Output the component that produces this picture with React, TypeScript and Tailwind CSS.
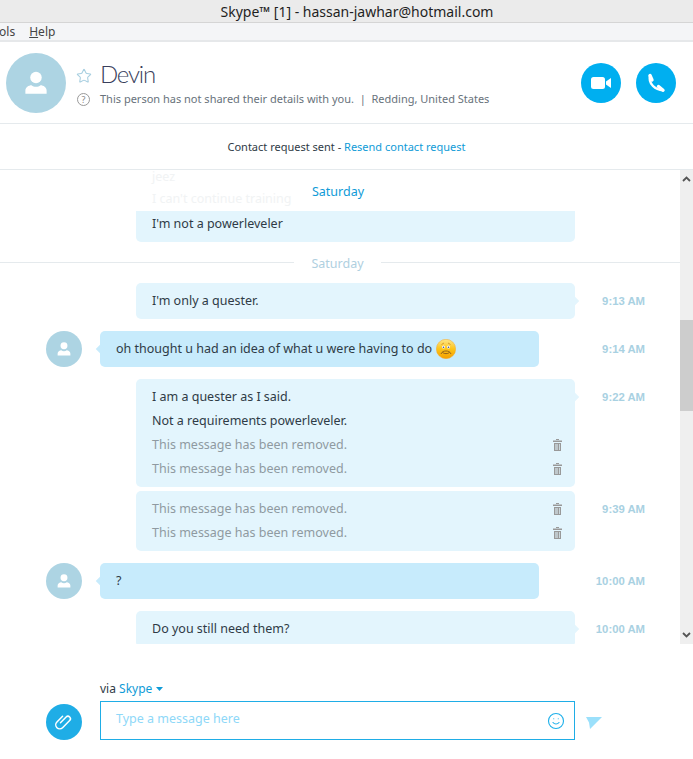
import React from 'react';
import { Smile, Star } from 'lucide-react';

const font = "font-['Noto_Sans','Open_Sans',sans-serif]";

const PersonIcon: React.FC<{ size: number }> = ({ size }) => (
  <svg width={size} height={size} viewBox="0 0 24 24" fill="#fff">
    <circle cx="12" cy="7.6" r="4.6" />
    <path d="M3.5 20.5v-2.4c0-2.6 2.6-4.3 4.9-4.3 1 .8 2.2 1.2 3.6 1.2s2.600-.4 3.600-1.200c2.300 0 4.900 1.700 4.900 4.300v2.400z" />
  </svg>
);

const Avatar: React.FC = () => (
  <div className="w-9 h-9 rounded-full bg-[#add4e3] flex items-center justify-center shrink-0">
    <PersonIcon size={18} />
  </div>
);

const TrashIcon: React.FC = () => (
  <svg width="9" height="12" viewBox="0 0 9 12" fill="#999" className="shrink-0">
    <rect x="3" y="0" width="3" height="1" />
    <rect x="0" y="1.500" width="9" height="1.500" />
    <path d="M1 4h7v8H1zM2.500 5v6h1V5zm2 0h.500v6h-.500zm1.500 0v6h.700V5z" fillRule="evenodd" />
  </svg>
);

const SadEmoji: React.FC = () => (
  <svg width="20" height="20" viewBox="0 0 20 20" className="shrink-0">
    <defs>
      <linearGradient id="face" x1="0" y1="0" x2="0" y2="1">
        <stop offset="0" stopColor="#fde68a" />
        <stop offset="0.5" stopColor="#fcc419" />
        <stop offset="1" stopColor="#f59f00" />
      </linearGradient>
    </defs>
    <circle cx="10" cy="10" r="9.700" fill="url(#face)" stroke="#f4a62a" strokeWidth="0.500" />
    <path d="M5.500 5.500l2.500-1.500M14.500 5.500l-2.500-1.500" stroke="#c98a2b" strokeWidth="0.800" fill="none" />
    <circle cx="7.500" cy="8" r="1.500" fill="#fff" />
    <circle cx="12.500" cy="8" r="1.500" fill="#fff" />
    <circle cx="7.500" cy="8.300" r="0.800" fill="#3b4a9c" />
    <circle cx="12.500" cy="8.300" r="0.800" fill="#3b4a9c" />
    <path d="M5 15c1-2.500 3-3 5-3s4 .500 5 3M6.500 13.500c2 1.500 5 1.500 7 0" stroke="#8a5a1a" strokeWidth="0.900" fill="none" />
  </svg>
);

const Time: React.FC<{ children: React.ReactNode }> = ({ children }) => (
  <div className="ml-auto h-9 flex items-center font-['Liberation_Sans',sans-serif] font-bold text-[11.3px] text-[#a9d1e2]">
    {children}
  </div>
);

const Tail: React.FC<{ side: 'left' | 'right'; color: string }> = ({ side, color }) => (
  <span
    className={`absolute top-[15px] w-[6px] h-[6px] rotate-45 ${color} ${side === 'right' ? '-right-[3px]' : '-left-[3px]'}`}
  />
);

const Removed: React.FC = () => (
  <div className="h-6 flex items-center justify-between text-[#8f9aa1]">
    <span>This message has been removed.</span>
    <TrashIcon />
  </div>
);

const Line: React.FC<{ children: React.ReactNode }> = ({ children }) => (
  <div className="h-6 flex items-center">{children}</div>
);

const OwnRow: React.FC<{ time?: string; mt?: string; tail?: boolean; children: React.ReactNode }> = ({ time, mt, tail, children }) => (
  <div className={`flex items-start pl-[136px] pr-[35px] ${mt ?? 'mt-3'}`}>
    <div className="relative w-[439px] bg-[#e3f5fd] rounded-[5px] pl-4 pr-[13px] py-[6px]">
      {tail && <Tail side="right" color="bg-[#e3f5fd]" />}
      {children}
    </div>
    {time && <Time>{time}</Time>}
  </div>
);

const TheirRow: React.FC<{ time: string; children: React.ReactNode }> = ({ time, children }) => (
  <div className="flex items-start pl-[46px] pr-[35px] mt-3">
    <Avatar />
    <div className="relative ml-[18px] w-[439px] h-9 bg-[#c7ebfc] rounded-[5px] px-4 flex items-center gap-1">
      <Tail side="left" color="bg-[#c7ebfc]" />
      {children}
    </div>
    <Time>{time}</Time>
  </div>
);

const Chat: React.FC = () => (
  <div className="relative flex-1 h-[474px] overflow-hidden text-[12.5px]">
    <div className="absolute top-[13px] left-0 w-[676px] text-center text-[#0f9bd7]">Saturday</div>
    <div className="pl-[152px] h-[41px] text-[#f1f3f4] leading-6 overflow-hidden">
      <div className="h-[17px] leading-[14px]">jeez</div>
      <div>I can't continue training</div>
    </div>
    <div className="ml-[136px] w-[439px] h-[31px] bg-[#e3f5fd] rounded-b-[5px] px-4 flex items-center pb-[5px]">
      I'm not a powerleveler
    </div>
    <div className="flex items-center mt-[13px] h-[15px]">
      <div className="w-[294px] h-px bg-[#e5eaed]" />
      <div className="w-[87px] text-center text-[#b0d0df] pt-[3px]">Saturday</div>
      <div className="flex-1 h-px bg-[#e5eaed]" />
    </div>
    <OwnRow time="9:13 AM" mt="mt-[13px]" tail>
      <Line>I'm only a quester.</Line>
    </OwnRow>
    <TheirRow time="9:14 AM">
      <span>oh thought u had an idea of what u were having to do</span>
      <SadEmoji />
    </TheirRow>
    <OwnRow time="9:22 AM" tail>
      <Line>I am a quester as I said.</Line>
      <Line>Not a requirements powerleveler.</Line>
      <Removed />
      <Removed />
    </OwnRow>
    <OwnRow time="9:39 AM" mt="mt-1">
      <Removed />
      <Removed />
    </OwnRow>
    <TheirRow time="10:00 AM">
      <span>?</span>
    </TheirRow>
    <OwnRow time="10:00 AM" tail>
      <Line>Do you still need them?</Line>
    </OwnRow>
  </div>
);

const Scrollbar: React.FC = () => (
  <div className="w-[13px] h-[474px] bg-[#efefef] flex flex-col items-center justify-between relative">
    <svg width="9" height="6" viewBox="0 0 9 6" className="mt-[6px]" fill="none" stroke="#555" strokeWidth="1.800">
      <path d="M1 5l3.500-3.500L8 5" />
    </svg>
    <div className="absolute top-[150px] left-0 w-full h-[91px] bg-[#cdcdcd]" />
    <svg width="9" height="6" viewBox="0 0 9 6" className="mb-[6px]" fill="none" stroke="#555" strokeWidth="1.800">
      <path d="M1 1l3.500 3.500L8 1" />
    </svg>
  </div>
);

export default function App() {
  return (
    <div className={`${font} w-[693px] h-[759px] bg-white text-[12px] text-[#2f3b46] overflow-hidden`}>
      <div className="h-[23px] bg-[#ebebeb] border-b border-[#d5d5d5] flex items-center justify-center pl-[21px] text-[14px] text-[#1f1f1f]">
        Skype™ [1] - hassan-jawhar@hotmail.com
      </div>
      <div className="h-[19px] bg-[#f4f5f7] border-b-2 border-[#e6e8ea] flex items-center text-[#444] -ml-[14px] gap-[14px]">
        <span>Tools</span>
        <span><span className="underline">H</span>elp</span>
      </div>
      <div className="h-[82px] border-b border-[#e5eaed] flex items-center pl-[6px] pr-[17px]">
        <div className="w-[60px] h-[60px] rounded-full bg-[#add4e3] flex items-center justify-center">
          <PersonIcon size={30} />
        </div>
        <div className="ml-[10px] flex-1 pt-[3px]">
          <div className="flex items-center h-[30px]">
            <Star size={16} strokeWidth={1.600} className="text-[#a8cfe0]" />
            <span className="ml-[8px] mb-[4px] text-[24px] tracking-[-1.2px] font-['Lato',sans-serif] font-light text-[#3a3f5c] leading-none">Devin</span>
          </div>
          <div className="flex items-center">
            <div className="w-[13px] h-[13px] ml-px rounded-full border border-[#999] flex items-center justify-center text-[9px] leading-none text-[#888]">?</div>
            <span className="ml-[10px] text-[11px] text-[#68727b]">This person has not shared their details with you.&nbsp; |&nbsp; Redding, United States</span>
          </div>
        </div>
        <div className="flex gap-[15px]">
          <div className="w-10 h-10 rounded-full bg-[#00aff0] flex items-center justify-center">
            <svg width="20" height="12" viewBox="0 0 20 12" fill="#fff">
              <rect x="0" y="0" width="14" height="12" rx="2.500" />
              <path d="M15 4.500L20 1v10l-5-3.500z" />
            </svg>
          </div>
          <div className="w-10 h-10 rounded-full bg-[#00aff0] flex items-center justify-center">
            <svg width="20" height="20" viewBox="0 0 20 20" fill="none" stroke="#fff" strokeLinecap="round">
              <path d="M4 2.500c-1 4 .500 8 3 10.500s5.500 4 10 4.200" strokeWidth="2.400" />
              <path d="M4 2.500l2 4.500M12.500 13.500l4.500 3.700" strokeWidth="3.400" />
            </svg>
          </div>
        </div>
      </div>
      <div className="h-[46px] border-b border-[#e5eaed] flex items-center justify-center text-[11px] pt-[2px]">
        <span>Contact request sent - <span className="text-[#0f9bd7]">Resend contact request</span></span>
      </div>
      <div className="flex">
        <Chat />
        <Scrollbar />
      </div>
      <div className="mt-[35px] pl-[100px] h-[20px] flex items-center gap-1">
        <span>via <span className="text-[#0f9bd7]">Skype</span></span>
        <svg width="7" height="4" viewBox="0 0 7 4" fill="#0f9bd7"><path d="M0 0h7L3.500 4z" /></svg>
      </div>
      <div className="mt-[2px] pl-[46px] flex items-end">
        <div className="w-9 h-9 rounded-full bg-[#1fade6] flex items-center justify-center">
          <svg width="24" height="24" viewBox="0 0 24 24" fill="none" stroke="#fff" strokeWidth="1.500" strokeLinecap="round">
            <path transform="rotate(45 12 12)" d="M10 15V7a2.500 2.500 0 0 1 5 0v10a4 4 0 0 1-8 0V9" />
          </svg>
        </div>
        <div className="ml-[18px] w-[475px] h-[39px] border border-[#1fade6] flex items-center justify-between pl-[15px] pr-[9px] pb-[3px] text-[#8ed8f8] text-[12.5px]">
          <span>Type a message here</span>
          <Smile size={18} strokeWidth={1.500} className="text-[#1fb0ea] mt-[3px]" />
        </div>
        <svg width="16" height="12" viewBox="0 0 16 12" fill="#9be0fb" className="ml-[11px] mb-[11px]">
          <path d="M0 0h16L4 12l-1-6.500z" />
        </svg>
      </div>
    </div>
  );
}
